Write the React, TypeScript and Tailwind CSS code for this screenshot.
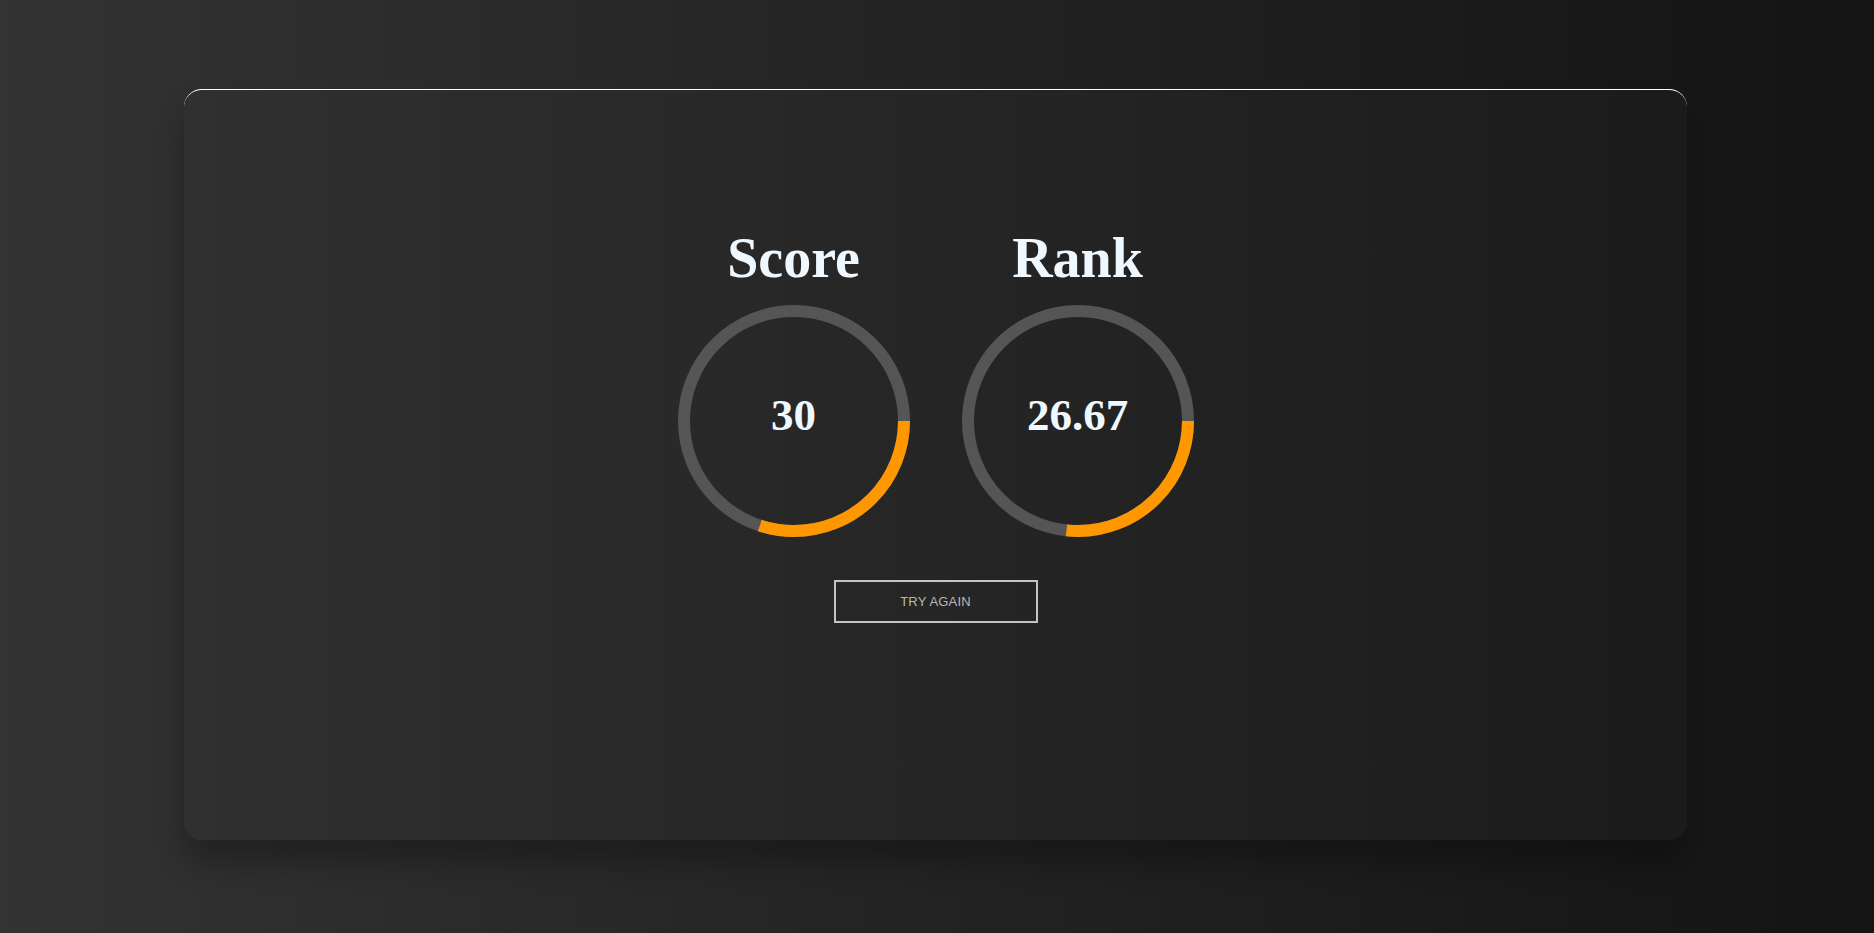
import React from 'react';

interface Stat {
    label: string;
    value: string;
    percent: number;
}

const stats: Stat[] = [
    { label: 'Score', value: '30', percent: 30 },
    { label: 'Rank', value: '26.67', percent: 26.67 },
];

const R = 110;
const C = 2 * Math.PI * R;

const Ring: React.FC<{ stat: Stat }> = ({ stat }) => {
    const dash = (stat.percent / 100) * C;
    return (
        <div className="flex flex-col items-center w-[232px]">
            <h2 className="font-['Liberation_Serif',serif] font-bold text-[56px] leading-none text-[#f0f8ff] h-[56px]">
                {stat.label}
            </h2>
            <div className="relative mt-[19px] w-[232px] h-[232px]">
                <svg width="232" height="232" viewBox="0 0 232 232" className="block">
                    <circle cx="116" cy="116" r={R} fill="none" stroke="#555555" strokeWidth="12" />
                    <circle
                        cx="116"
                        cy="116"
                        r={R}
                        fill="none"
                        stroke="#ff9800"
                        strokeWidth="12"
                        strokeDasharray={`${dash} ${C}`}
                    />
                </svg>
                <div className="absolute inset-0 flex items-center justify-center">
                    <span className="mb-[11px] font-['Liberation_Serif',serif] font-bold text-[45px] leading-none text-[#f0f8ff]">
                        {stat.value}
                    </span>
                </div>
            </div>
        </div>
    );
};

export default function App() {
    return (
        <div className="h-[933px] w-full overflow-hidden bg-gradient-to-r from-[#333333] to-[#141414] pt-[89px]">
            <div className="ml-[184px] w-[1503px] h-[751px] rounded-[18px] border-t border-white bg-gradient-to-r from-[#303030] to-[#1b1b1b] shadow-[0_22px_30px_rgba(0,0,0,0.28)] flex flex-col items-center pt-[140px]">
                <div className="flex gap-[52px]">
                    {stats.map((s) => (
                        <Ring key={s.label} stat={s} />
                    ))}
                </div>
                <button className="mt-[43px] w-[204px] h-[43px] border-2 border-[#c4c4c4] bg-transparent text-[#b8b8b8] text-[13px] font-['Liberation_Sans',sans-serif] tracking-[0.2px] uppercase">
                    Try Again
                </button>
            </div>
        </div>
    );
}
